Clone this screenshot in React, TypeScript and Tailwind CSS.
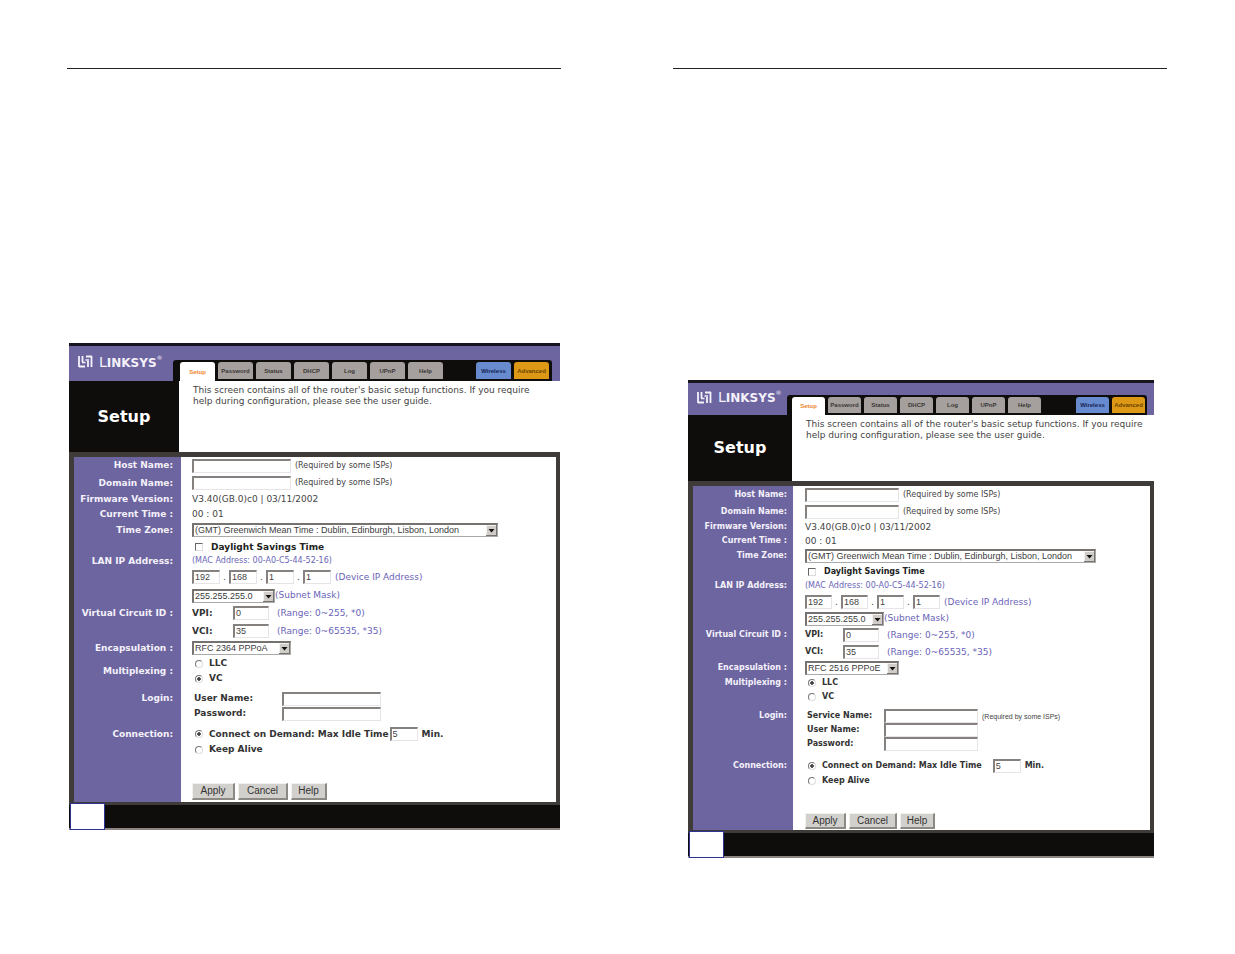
import type { ReactNode } from "react";
import { clsx } from "clsx";

const tabs = ["Setup", "Password", "Status", "DHCP", "Log", "UPnP", "Help"];

const large = {
  screen: "mt-[274px] ml-[2px] mr-px",
  header: "h-[38px]",
  brand: "w-[104px]",
  tabBar: "pl-[7px] pr-[3px] mr-[8px]",
  tab: "w-[35px]",
  tabHeight: "h-[17px]",
  title: "w-[110px]",
  intro: "h-[71px] pl-[14px]",
  side: "w-[107px] pr-[8px]",
  content: "pl-[11px]",
  bold: "text-[9px] font-bold",
  host: "h-[17px]",
  domain: "h-[18px]",
  firmware: "h-[15px]",
  clock: "h-[14px]",
  zone: "h-[18px]",
  dst: "h-[16px]",
  mac: "h-[12px]",
  ip: "h-[20px]",
  mask: "h-[17px]",
  vpi: "h-[18px]",
  vci: "h-[18px]",
  encap: "h-[16px]",
  radio: "h-[15px]",
  muxLabel: "h-[30px]",
  gapA: "h-[5px]",
  login: "h-[15px]",
  gapB: "h-[5px]",
  connect: "h-[16px]",
  keep: "h-[15px]",
  gapC: "h-[26px]",
  buttons: "h-[19px]",
  nameBox: "w-[99px]",
  zoneBox: "w-[306px]",
  ipBox: "w-[28px]",
  maskBox: "w-[83px]",
  vcLabel: "w-[41px]",
  encapBox: "w-[99px]",
  loginLabel: "w-[88px]",
  idleGap: "w-px",
  apply: "w-[43px] h-[17px]",
  cancel: "w-[50px] h-[17px]",
  help: "w-[36px] h-[17px]",
};

const small: typeof large = {
  screen: "mt-[311px] ml-[15px] mr-[13px]",
  header: "h-[35px]",
  brand: "w-[99px]",
  tabBar: "pl-[5px] pr-[2px] mr-[7px]",
  tab: "w-[33px]",
  tabHeight: "h-[16px]",
  title: "w-[104px]",
  intro: "h-[66px] pl-[14px]",
  side: "w-[100px] pr-[6px]",
  content: "pl-[12px]",
  bold: "text-[8px] font-bold",
  host: "h-[17px]",
  domain: "h-[17px]",
  firmware: "h-[14px]",
  clock: "h-[14px]",
  zone: "h-[16px]",
  dst: "h-[15px]",
  mac: "h-[14px]",
  ip: "h-[18px]",
  mask: "h-[15px]",
  vpi: "h-[18px]",
  vci: "h-[16px]",
  encap: "h-[16px]",
  radio: "h-[14px]",
  muxLabel: "h-[14px]",
  gapA: "h-[5px]",
  login: "h-[14px]",
  gapB: "h-[8px]",
  connect: "h-[14px]",
  keep: "h-[15px]",
  gapC: "h-[25px]",
  buttons: "h-[17px]",
  nameBox: "w-[94px]",
  zoneBox: "w-[291px]",
  ipBox: "w-[27px]",
  maskBox: "w-[79px]",
  vcLabel: "w-[38px]",
  encapBox: "w-[94px]",
  loginLabel: "w-[77px]",
  idleGap: "w-[11px]",
  apply: "w-[41px] h-[16px]",
  cancel: "w-[48px] h-[16px]",
  help: "w-[35px] h-[16px]",
};

type ScreenProps = { id: string; size: typeof large; encapsulation: string; multiplexing: "LLC" | "VC"; serviceName?: boolean };

function Line({ h, className, children }: { h: string; className?: string; children?: ReactNode }) {
  return <div className={clsx("flex items-center whitespace-nowrap", h, className)}>{children}</div>;
}

function TextBox({ label, width, value = "" }: { label: string; width: string; value?: string }) {
  return (
    <input
      type="text"
      aria-label={label}
      defaultValue={value}
      className={clsx(
        "h-[14px] shrink-0 border-t-2 border-l-2 border-r border-b border-t-[#85817f] border-l-[#85817f] border-r-[#e6e4e6] border-b-[#e6e4e6] bg-white pb-px pl-px font-['Liberation_Sans'] text-[9px] leading-none text-[#444] outline-none",
        width
      )}
    />
  );
}

function DropDown({ label, width, value }: { label: string; width: string; value: string }) {
  return (
    <div className={clsx("relative h-[14px] shrink-0", width)}>
      <select
        aria-label={label}
        className="block h-full w-full appearance-none border-t-2 border-l-2 border-r border-b border-t-[#76726f] border-l-[#76726f] border-r-[#aaa] border-b-[#aaa] bg-white pl-px font-['Liberation_Sans'] text-[9px] leading-none text-[#3c3c3c] outline-none"
      >
        <option>{value}</option>
      </select>
      <svg viewBox="0 0 11 11" className="pointer-events-none absolute top-[2px] right-px h-[11px] w-[11px]">
        <rect width="11" height="11" fill="#d0cdc9" />
        <path d="M0 .5h10.500M.5 0v10" stroke="#f3f2ef" fill="none" />
        <path d="M0 10.500h11M10.500 0v11" stroke="#77736f" fill="none" />
        <path d="M2.500 4h6L5.500 7.500z" fill="#111" />
      </svg>
    </div>
  );
}

function Radio({ name, label, className, checked }: { name: string; label: string; className: string; checked?: boolean }) {
  return (
    <label className={clsx("flex items-center gap-[6px] pl-[3px] text-[#333]", className)}>
      <input
        type="radio"
        name={name}
        defaultChecked={checked}
        className="size-[8px] appearance-none rounded-full border border-t-[#777] border-r-[#ddd] border-b-[#ddd] border-l-[#777] checked:bg-[radial-gradient(circle,#444_35%,#fff_50%)]"
      />
      {label}
    </label>
  );
}

function Logo() {
  return (
    <div className="flex items-center gap-[6px] text-[#f4f1fb]">
      <svg viewBox="0 0 15 13" className="h-[13px] w-[15px]" fill="none" stroke="#f4f1fb" strokeWidth="1.800">
        <path d="M1 1v11M4.500 1v6M1 11.500h6M8 1.500h6M13.500 1v11M10 6v6" />
        <path d="M4 7.500h3.500M7.500 5h3.500" strokeWidth="1.400" />
      </svg>
      <div className="flex items-baseline text-[14px] leading-none">
        L<span className="text-[12px] leading-none font-bold">INKSYS</span>
        <span className="self-start text-[6px] leading-none">®</span>
      </div>
    </div>
  );
}

function RouterScreen({ id, size: s, encapsulation, multiplexing, serviceName }: ScreenProps) {
  const button =
    "border-t border-l border-r-2 border-b-2 border-t-[#f2f1ee] border-l-[#f2f1ee] border-r-[#8c8884] border-b-[#8c8884] bg-[#d2d0cc] font-['Liberation_Sans'] text-[10px] leading-none text-[#333]";
  const tabBase = "flex items-center justify-center rounded-t-[3px] font-['Liberation_Sans'] text-[6px] font-bold";
  const note = "pl-[4px] text-[8px]";

  const row = (label: string, labelHeight: string, children: ReactNode) => (
    <div className="flex">
      <div className={clsx("shrink-0 bg-[#6d659f] text-right text-[#f4f1fb]", s.side, s.bold)}>
        <div className={clsx("flex items-center justify-end whitespace-nowrap", labelHeight)}>{label}</div>
      </div>
      <div className={clsx("min-w-0 flex-1", s.content)}>{children}</div>
    </div>
  );

  return (
    <div className={clsx("bg-[#0f0d0c] text-[9px] leading-none text-[#444]", s.screen)}>
      <header className={clsx("flex border-t-[3px] border-t-[#17131f] bg-[#6d659f]", s.header)}>
        <div className={clsx("flex shrink-0 items-center pb-1 pl-[9px]", s.brand)}>
          <Logo />
        </div>
        <nav className={clsx("mt-auto flex flex-1 items-end gap-[3px] rounded-t-[3px] bg-[#0f0d0c] pt-[2px]", s.tabBar)}>
          {tabs.map((tab) => (
            <a
              key={tab}
              href="#"
              className={clsx(tabBase, s.tab, tab === "Setup" ? "self-stretch bg-white text-[#f0852d]" : ["mb-[2px] bg-[#a5a09d] text-[#3a3634]", s.tabHeight])}
            >
              {tab}
            </a>
          ))}
          <a href="#" className={clsx(tabBase, "mb-[2px] ml-auto bg-[#688bd0] text-[#142555]", s.tab, s.tabHeight)}>
            Wireless
          </a>
          <a href="#" className={clsx(tabBase, "mb-[2px] bg-[#dd9916] text-[#6c4300]", s.tab, s.tabHeight)}>
            Advanced
          </a>
        </nav>
      </header>

      <div className="flex">
        <h1 className={clsx("flex shrink-0 items-center justify-center text-[16px] font-bold text-white", s.title)}>Setup</h1>
        <p className={clsx("flex-1 bg-white pt-[4px] leading-[11px]", s.intro)}>
          This screen contains all of the router's basic setup functions. If you require
          <br />
          help during configuration, please see the user guide.
        </p>
      </div>

      <form className="border-t-[5px] border-r-4 border-b-[3px] border-l-[5px] border-[#3f3b39] bg-white">
        {row("Host Name:", s.host,
          <Line h={s.host}>
            <TextBox label="Host Name" width={s.nameBox} />
            <span className={note}>(Required by some ISPs)</span>
          </Line>
        )}
        {row("Domain Name:", s.domain,
          <Line h={s.domain}>
            <TextBox label="Domain Name" width={s.nameBox} />
            <span className={note}>(Required by some ISPs)</span>
          </Line>
        )}
        {row("Firmware Version:", s.firmware, <Line h={s.firmware}>V3.40(GB.0)c0 | 03/11/2002</Line>)}
        {row("Current Time :", s.clock, <Line h={s.clock}>00 : 01</Line>)}
        {row("Time Zone:", s.zone,
          <>
            <Line h={s.zone}>
              <DropDown label="Time Zone" width={s.zoneBox} value="(GMT) Greenwich Mean Time : Dublin, Edinburgh, Lisbon, London" />
            </Line>
            <Line h={s.dst}>
              <label className={clsx("flex items-center gap-[8px] pl-[3px] text-[#222]", s.bold)}>
                <input type="checkbox" className="size-[8px] appearance-none border border-t-[#666] border-r-[#ddd] border-b-[#ddd] border-l-[#666]" />
                Daylight Savings Time
              </label>
            </Line>
          </>
        )}
        {row("LAN IP Address:", s.mac,
          <>
            <Line h={s.mac} className="text-[8px] text-[#6a64b8]">(MAC Address: 00-A0-C5-44-52-16)</Line>
            <Line h={s.ip}>
              {["192", "168", "1", "1"].map((part, i) => (
                <div key={i} className="flex items-center">
                  {i > 0 && <span className="w-[9px] text-center">.</span>}
                  <TextBox label={`IP address part ${i + 1}`} width={s.ipBox} value={part} />
                </div>
              ))}
              <span className="pl-[4px] text-[#6a64b8]">(Device IP Address)</span>
            </Line>
            <Line h={s.mask}>
              <DropDown label="Subnet Mask" width={s.maskBox} value="255.255.255.0" />
              <span className="text-[#6a64b8]">(Subnet Mask)</span>
            </Line>
          </>
        )}
        {row("Virtual Circuit ID :", s.vpi,
          <>
            <Line h={s.vpi}>
              <span className={clsx("text-[#333]", s.vcLabel, s.bold)}>VPI:</span>
              <TextBox label="VPI" width="w-[36px]" value="0" />
              <span className="pl-[8px] text-[#6a64b8]">(Range: 0~255, *0)</span>
            </Line>
            <Line h={s.vci}>
              <span className={clsx("text-[#333]", s.vcLabel, s.bold)}>VCI:</span>
              <TextBox label="VCI" width="w-[36px]" value="35" />
              <span className="pl-[8px] text-[#6a64b8]">(Range: 0~65535, *35)</span>
            </Line>
          </>
        )}
        {row("Encapsulation :", s.encap,
          <Line h={s.encap}>
            <DropDown label="Encapsulation" width={s.encapBox} value={encapsulation} />
          </Line>
        )}
        {row("Multiplexing :", s.muxLabel,
          <>
            <Line h={s.radio}>
              <Radio name={`${id}-mux`} label="LLC" className={s.bold} checked={multiplexing === "LLC"} />
            </Line>
            <Line h={s.radio}>
              <Radio name={`${id}-mux`} label="VC" className={s.bold} checked={multiplexing === "VC"} />
            </Line>
          </>
        )}
        {row("", s.gapA, null)}
        {row("Login:", s.login,
          [...(serviceName ? ["Service Name:"] : []), "User Name:", "Password:"].map((field) => (
            <Line key={field} h={s.login} className="pl-[2px]">
              <label htmlFor={`${id}-${field}`} className={clsx("text-[#333]", s.loginLabel, s.bold)}>
                {field}
              </label>
              <input
                id={`${id}-${field}`}
                type={field === "Password:" ? "password" : "text"}
                className={clsx("h-[14px] border-t-2 border-l-2 border-r border-b border-t-[#85817f] border-l-[#85817f] border-r-[#e6e4e6] border-b-[#e6e4e6] bg-white outline-none", s.nameBox)}
              />
              {field === "Service Name:" && <span className="pl-[4px] font-['Liberation_Sans'] text-[7px]">(Required by some ISPs)</span>}
            </Line>
          ))
        )}
        {row("", s.gapB, null)}
        {row("Connection:", s.connect,
          <>
            <Line h={s.connect}>
              <Radio name={`${id}-connection`} label="Connect on Demand: Max Idle Time" className={s.bold} checked />
              <span className={s.idleGap} />
              <TextBox label="Max idle time in minutes" width="w-[28px]" value="5" />
              <span className={clsx("pl-[4px] text-[#333]", s.bold)}>Min.</span>
            </Line>
            <Line h={s.keep}>
              <Radio name={`${id}-connection`} label="Keep Alive" className={s.bold} />
            </Line>
            <div className={s.gapC} />
            <div className={clsx("flex gap-[3px]", s.buttons)}>
              <button type="button" className={clsx(button, s.apply)}>Apply</button>
              <button type="button" className={clsx(button, s.cancel)}>Cancel</button>
              <button type="button" className={clsx(button, s.help)}>Help</button>
            </div>
          </>
        )}
      </form>

      <footer className="relative h-[25px] border-b-2 border-[#8d8683]">
        <div className="absolute -bottom-[2px] left-px h-[27px] w-[35px] border border-[#2d3494] bg-white" />
      </footer>
    </div>
  );
}

export default function App() {
  return (
    <main className="grid min-h-screen grid-cols-2 items-start gap-x-[112px] bg-white pt-[68px] pr-[68px] pl-[67px] font-['DejaVu_Sans',sans-serif]">
      <section className="border-t border-[#222]">
        <RouterScreen id="pppoa" size={large} encapsulation="RFC 2364 PPPoA" multiplexing="VC" />
      </section>
      <section className="border-t border-[#222]">
        <RouterScreen id="pppoe" size={small} encapsulation="RFC 2516 PPPoE" multiplexing="LLC" serviceName />
      </section>
    </main>
  );
}
